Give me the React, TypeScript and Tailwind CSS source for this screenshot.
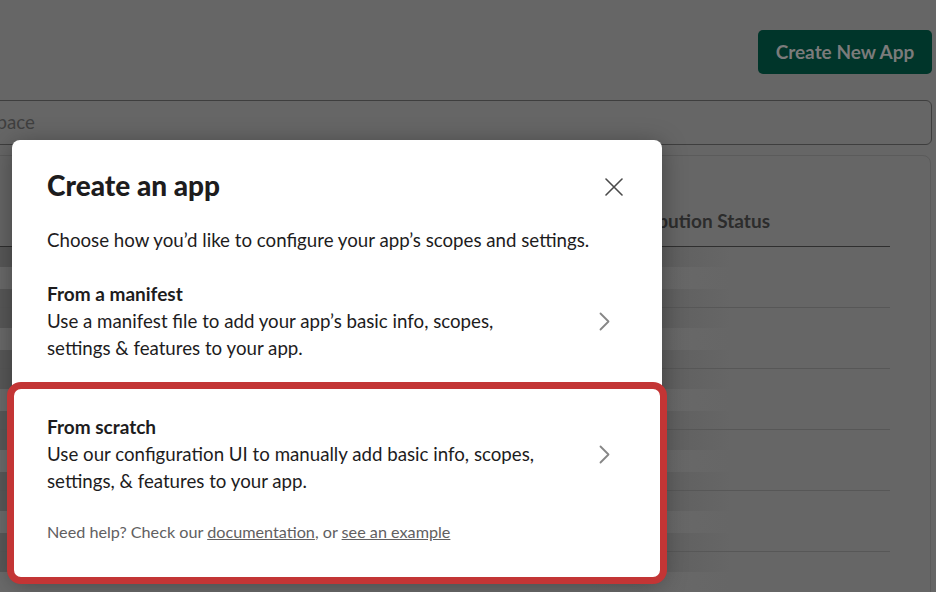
import React from 'react';

const rows = [0, 1, 2, 3, 4, 5];

const Chevron = () => (
  <svg width="11" height="19" viewBox="0 0 11 19" fill="none" className="shrink-0">
    <path d="M1.5 1.5 L9.5 9.5 L1.5 17.5" stroke="#868686" strokeWidth="1.8" strokeLinecap="round" strokeLinejoin="round" />
  </svg>
);

const Option = ({ title, lines }: { title: string; lines: string[] }) => (
  <button className="w-full flex items-center justify-between pl-[35px] pr-[52px] pt-[26px] pb-[25px] text-left">
    <div>
      <div className="text-[19px] leading-[28px] font-bold text-[#1d1c1d]">{title}</div>
      <div className="text-[18.7px] leading-[27px] text-[#1d1c1d]">
        {lines.map((l, i) => (
          <React.Fragment key={i}>
            {l}
            {i < lines.length - 1 && <br />}
          </React.Fragment>
        ))}
      </div>
    </div>
    <Chevron />
  </button>
);

export default function App() {
  return (
    <div className="relative w-[936px] h-[592px] overflow-hidden bg-[#666666] font-[Lato,sans-serif]">
      {/* dimmed page behind the dialog */}
      <div className="ml-[-60px] w-[992px]">
        <div className="pt-[30px] flex justify-end">
          <button className="h-[44px] w-[174px] rounded-[5px] bg-[#00352a] text-[19px] font-bold text-[#7b7b7b]">
            Create New App
          </button>
        </div>
        <div className="mt-[26px] h-[45px] rounded-[6px] border border-[#3e3e3e] flex items-center pl-[6px] text-[18.7px] text-[#3f3f3f]">
          workspace
        </div>
        <div className="mt-[10px] mr-[1px] h-[460px] rounded-[8px] border border-[#5b5b5b] pr-[40px]">
          <div className="h-[91px] border-b border-[#2f2f2f] flex items-end justify-end pr-[120px] pb-[12px]">
            <span className="text-[19px] leading-[27px] font-bold text-[#2c2c2c]">Distribution Status</span>
          </div>
          {rows.map((r) => (
            <div key={r} className="h-[61px] border-b border-[#575757] flex">
              <div className="w-[790px] flex flex-col">
                <div className="h-[20px] bg-linear-to-r from-[#585858] from-[82%] to-[#666666]" />
                <div className="h-[22px] bg-linear-to-r from-[#6a6a6a] from-[82%] to-[#666666]" />
                <div className="h-[18px] bg-linear-to-r from-[#585858] from-[82%] to-[#666666]" />
              </div>
            </div>
          ))}
        </div>
      </div>

      {/* dialog */}
      <div className="absolute left-[12px] top-[140px] w-[650px] rounded-[8px] bg-white shadow-[0_4px_24px_rgba(0,0,0,0.35)] pb-[37px]">
        <div className="flex items-center justify-between pl-[35px] pr-[39px] pt-[27px]">
          <h1 className="text-[28px] leading-[36px] font-black text-[#1d1c1d]">Create an app</h1>
          <button className="w-[18px] h-[18px] flex items-center justify-center mt-[3px]">
            <svg width="18" height="18" viewBox="0 0 18 18" fill="none">
              <path d="M1 1 L17 17 M17 1 L1 17" stroke="#4a4a4a" strokeWidth="1.6" strokeLinecap="round" />
            </svg>
          </button>
        </div>
        <p className="mt-[24px] px-[35px] text-[18.7px] leading-[27px] text-[#1d1c1d]">
          Choose how you’d like to configure your app’s scopes and settings.
        </p>
        <Option
          title="From a manifest"
          lines={['Use a manifest file to add your app’s basic info, scopes,', 'settings & features to your app.']}
        />
        <Option
          title="From scratch"
          lines={['Use our configuration UI to manually add basic info, scopes,', 'settings, & features to your app.']}
        />
        <p className="px-[35px] text-[16.2px] leading-[23px] text-[#616061]">
          Need help? Check our <span className="underline">documentation</span>, or{' '}
          <span className="underline">see an example</span>
        </p>
      </div>

      {/* highlight box */}
      <div className="absolute left-[7px] top-[382px] w-[660px] h-[202px] rounded-[14px] border-[7px] border-[#c33535]" />
    </div>
  );
}
